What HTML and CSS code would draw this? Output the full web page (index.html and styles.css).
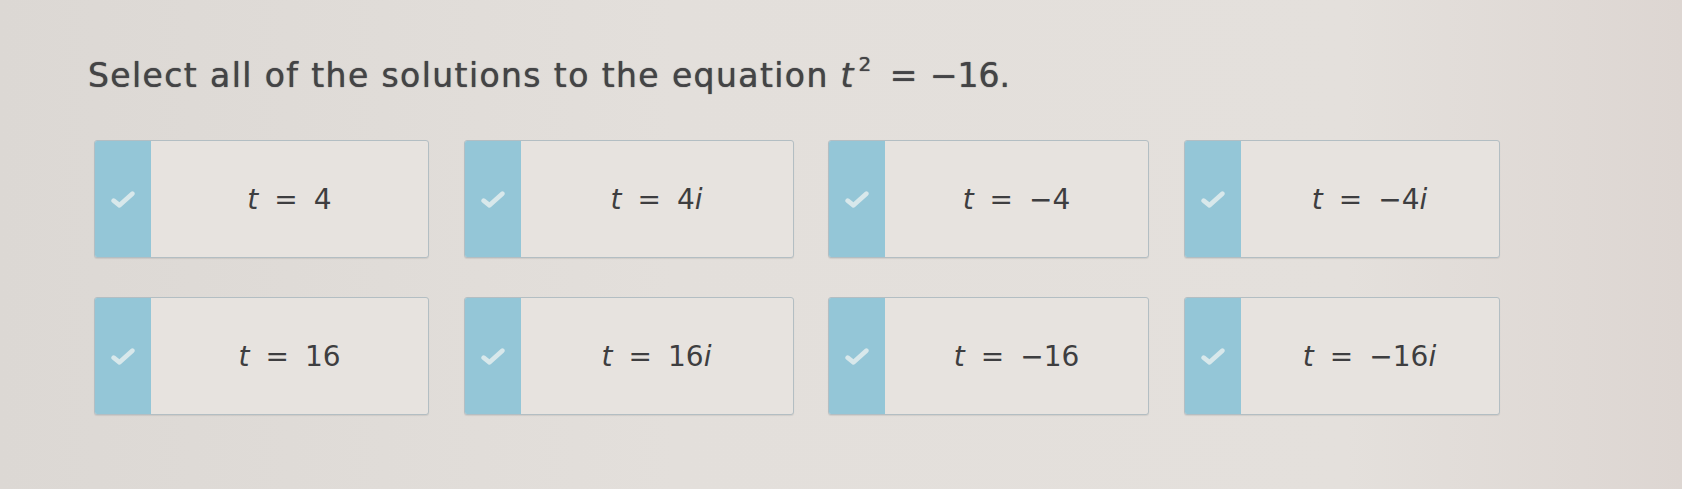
FILE: index.html
```html
<!DOCTYPE html>
<html>
<head>
<meta charset="utf-8">
<link rel="stylesheet" href="styles.css">
</head>
<body>
<div class="page">
  <p class="prompt">Select all of the solutions to the equation <span class="math"><span class="var">t</span><sup>2</sup> <span class="rel">=</span> −16.</span></p>
  <div class="grid">
    <div class="card"><div class="strip"><svg viewBox="0 0 24 18" class="check"><path d="M4 10 L9 14 L20 4" /></svg></div><div class="label"><span class="var">t</span><span class="eq">=</span>4</div></div>
    <div class="card"><div class="strip"><svg viewBox="0 0 24 18" class="check"><path d="M4 10 L9 14 L20 4" /></svg></div><div class="label"><span class="var">t</span><span class="eq">=</span>4<span class="var">i</span></div></div>
    <div class="card"><div class="strip"><svg viewBox="0 0 24 18" class="check"><path d="M4 10 L9 14 L20 4" /></svg></div><div class="label"><span class="var">t</span><span class="eq">=</span>−4</div></div>
    <div class="card"><div class="strip"><svg viewBox="0 0 24 18" class="check"><path d="M4 10 L9 14 L20 4" /></svg></div><div class="label"><span class="var">t</span><span class="eq">=</span>−4<span class="var">i</span></div></div>
    <div class="card"><div class="strip"><svg viewBox="0 0 24 18" class="check"><path d="M4 10 L9 14 L20 4" /></svg></div><div class="label"><span class="var">t</span><span class="eq">=</span>16</div></div>
    <div class="card"><div class="strip"><svg viewBox="0 0 24 18" class="check"><path d="M4 10 L9 14 L20 4" /></svg></div><div class="label"><span class="var">t</span><span class="eq">=</span>16<span class="var">i</span></div></div>
    <div class="card"><div class="strip"><svg viewBox="0 0 24 18" class="check"><path d="M4 10 L9 14 L20 4" /></svg></div><div class="label"><span class="var">t</span><span class="eq">=</span>−16</div></div>
    <div class="card"><div class="strip"><svg viewBox="0 0 24 18" class="check"><path d="M4 10 L9 14 L20 4" /></svg></div><div class="label"><span class="var">t</span><span class="eq">=</span>−16<span class="var">i</span></div></div>
  </div>
</div>
</body>
</html>
```
FILE: styles.css
```css
html, body {
  margin: 0;
  padding: 0;
}
body {
  width: 1682px;
  height: 489px;
  overflow: hidden;
  background: linear-gradient(90deg, #dcd8d4 0%, #e3dfdb 40%, #e4e0dc 80%, #ddd6d2 100%);
  font-family: "DejaVu Sans", Verdana, sans-serif;
  color: #3d3d3f;
}
.page {
  padding: 53px 0 0 88px;
}
.prompt {
  margin: 0;
  font-size: 33px;
  line-height: 46px;
  letter-spacing: 1.4px;
  color: #444446;
  text-shadow: 0 0 1px #444446;
}
.math {
  letter-spacing: 0;
}
.prompt sup {
  font-size: 20px;
  vertical-align: 16px;
  line-height: 0;
  margin-left: 5px;
}
.rel {
  margin: 0 2px 0 8px;
}
.var {
  font-style: italic;
}
.grid {
  margin-top: 41px;
  display: grid;
  grid-template-columns: 335px 330px 321px 316px;
  column-gap: 34.5px;
  row-gap: 39px;
  padding-left: 6px;
}
.card {
  display: flex;
  height: 116px;
  border: 1px solid #b3bec3;
  border-radius: 3px;
  background: #e7e3df;
  overflow: hidden;
  box-shadow: 0 1px 1px rgba(0,0,0,0.08);
}
.strip {
  width: 56px;
  flex: none;
  background: #94c6d7;
  display: flex;
  align-items: center;
  justify-content: center;
}
.check {
  width: 28px;
  height: 21px;
  fill: none;
  stroke: #e4eeef;
  stroke-width: 4;
  stroke-linecap: round;
  stroke-linejoin: round;
  opacity: 0.85;
}
.label {
  flex: 1;
  display: flex;
  align-items: center;
  justify-content: center;
  font-size: 28px;
  color: #3e3e40;
}
.eq {
  margin: 0 16px;
}
```
